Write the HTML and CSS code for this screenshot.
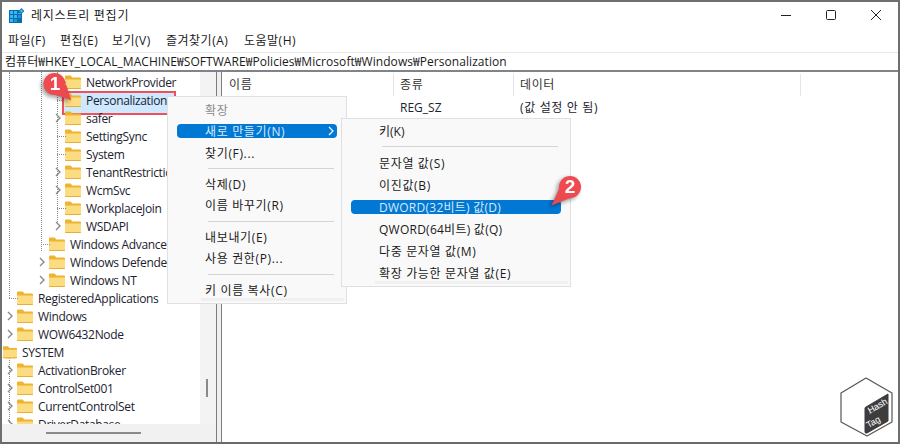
FILE: index.html
```html
<!DOCTYPE html>
<html lang="ko">
<head>
<meta charset="utf-8">
<title>레지스트리 편집기</title>
<link rel="stylesheet" href="styles.css">
</head>
<body>
<svg class="defs" width="0" height="0" aria-hidden="true">
  <defs>
    <symbol id="folder" viewBox="0 0 16 14">
      <path d="M0 1.5Q0 .5 1 .5H5.5L7.5 2.500H15Q16 2.500 16 3.500V13Q16 14 15 14H1Q0 14 0 13Z" fill="#eeb32f"/>
      <path d="M0 4.500H15.500Q16 4.500 16 5V13Q16 14 15 14H1Q0 14 0 13Z" fill="#fcdc80"/>
      <path d="M0 13H16V13.200Q16 14 15 14H1Q0 14 0 13.200Z" fill="#e9ae35"/>
    </symbol>
    <symbol id="chev" viewBox="0 0 8 10">
      <path d="M2 1L6 5L2 9" fill="none" stroke="#8a8a8a" stroke-width="1.400"/>
    </symbol>
  </defs>
</svg>
<div class="window">
  <header class="titlebar">
    <svg class="appicon" viewBox="0 0 15 15">
      <rect x="0" y="2" width="13" height="13" fill="#0b6cab"/>
      <path d="M1 3h3v3H1zM5 3h3v3H5zM9 5h3v1H9zM1 7h3v3H1zM5 7h3v3H5zM1 11h3v3H1z" fill="#35b9f4"/>
      <path d="M5 11h3v3H5zM9 7h3v3H9z" fill="#1f93d6"/>
      <path d="M12.500 0L15.500 3L12.500 6L9.500 3Z" fill="#1b86c8"/>
      <rect x="11.700" y="2.200" width="1.600" height="1.600" fill="#7fd0f5"/>
    </svg>
    <span class="title">레지스트리 편집기</span>
    <div class="controls">
      <svg viewBox="0 0 10 10"><path d="M0 5.500H10" stroke="#222" fill="none"/></svg>
      <svg viewBox="0 0 10 10"><rect x=".5" y=".5" width="9" height="9" rx="1" stroke="#222" fill="none"/></svg>
      <svg viewBox="0 0 10 10"><path d="M0 0L10 10M10 0L0 10" stroke="#222" fill="none"/></svg>
    </div>
  </header>
  <nav class="menubar">
    <span class="m1">파일(F)</span><span class="m2">편집(E)</span><span class="m3">보기(V)</span><span class="m4">즐겨찾기(A)</span><span>도움말(H)</span>
  </nav>
  <div class="address">컴퓨터₩HKEY_LOCAL_MACHINE₩SOFTWARE₩Policies₩Microsoft₩Windows₩Personalization</div>
  <main class="main">
    <section class="treepane">
      <div class="treeview">
        <i class="vl vl-a"></i><i class="vl vl-b"></i><i class="vl vl-c"></i><i class="vl vl-d"></i>
        <div class="row l5"><i class="stub"></i><svg class="folder"><use href="#folder"/></svg><span>NetworkProvider</span></div>
        <div class="row l5 selected"><i class="stub"></i><svg class="folder"><use href="#folder"/></svg><span class="sel-text">Personalization</span></div>
        <div class="row l5"><svg class="chev"><use href="#chev"/></svg><svg class="folder"><use href="#folder"/></svg><span>safer</span></div>
        <div class="row l5"><i class="stub"></i><svg class="folder"><use href="#folder"/></svg><span>SettingSync</span></div>
        <div class="row l5"><i class="stub"></i><svg class="folder"><use href="#folder"/></svg><span>System</span></div>
        <div class="row l5"><svg class="chev"><use href="#chev"/></svg><svg class="folder"><use href="#folder"/></svg><span>TenantRestrictions</span></div>
        <div class="row l5"><svg class="chev"><use href="#chev"/></svg><svg class="folder"><use href="#folder"/></svg><span>WcmSvc</span></div>
        <div class="row l5"><i class="stub"></i><svg class="folder"><use href="#folder"/></svg><span>WorkplaceJoin</span></div>
        <div class="row l5"><svg class="chev"><use href="#chev"/></svg><svg class="folder"><use href="#folder"/></svg><span>WSDAPI</span></div>
        <div class="row l4"><i class="stub"></i><svg class="folder"><use href="#folder"/></svg><span>Windows Advanced Threat</span></div>
        <div class="row l4"><svg class="chev"><use href="#chev"/></svg><svg class="folder"><use href="#folder"/></svg><span>Windows Defender</span></div>
        <div class="row l4"><svg class="chev"><use href="#chev"/></svg><svg class="folder"><use href="#folder"/></svg><span>Windows NT</span></div>
        <div class="row l3"><i class="stub"></i><svg class="folder"><use href="#folder"/></svg><span>RegisteredApplications</span></div>
        <div class="row l3"><svg class="chev"><use href="#chev"/></svg><svg class="folder"><use href="#folder"/></svg><span>Windows</span></div>
        <div class="row l3"><svg class="chev"><use href="#chev"/></svg><svg class="folder"><use href="#folder"/></svg><span>WOW6432Node</span></div>
        <div class="row l2"><svg class="folder"><use href="#folder"/></svg><span>SYSTEM</span></div>
        <div class="row l3"><svg class="chev"><use href="#chev"/></svg><svg class="folder"><use href="#folder"/></svg><span>ActivationBroker</span></div>
        <div class="row l3"><svg class="chev"><use href="#chev"/></svg><svg class="folder"><use href="#folder"/></svg><span>ControlSet001</span></div>
        <div class="row l3"><svg class="chev"><use href="#chev"/></svg><svg class="folder"><use href="#folder"/></svg><span>CurrentControlSet</span></div>
        <div class="row l3"><svg class="chev"><use href="#chev"/></svg><svg class="folder"><use href="#folder"/></svg><span>DriverDatabase</span></div>
      </div>
      <div class="vscroll"><b></b></div>
      <div class="hscroll"><b></b></div>
    </section>
    <div class="splitter"></div>
    <section class="listpane">
      <div class="listhead"><span class="c1">이름</span><span class="c2">종류</span><span class="c3">데이터</span></div>
      <div class="listrow"><span class="c1"></span><span class="c2 plain">REG_SZ</span><span class="c3 plain ko">(값 설정 안 됨)</span></div>
    </section>
  </main>
</div>

<div class="ctx ctx-main">
  <div class="item head ko">확장</div>
  <div class="item active ko">새로 만들기(N)<svg class="sub" viewBox="0 0 6 10"><path d="M1 1L5 5L1 9" fill="none" stroke="#fff" stroke-width="1.200"/></svg></div>
  <div class="item ko">찾기(F)...</div>
  <hr>
  <div class="item ko">삭제(D)</div>
  <div class="item ko">이름 바꾸기(R)</div>
  <hr>
  <div class="item ko">내보내기(E)</div>
  <div class="item ko">사용 권한(P)...</div>
  <hr>
  <div class="item ko">키 이름 복사(C)</div>
  <i class="band"></i>
</div>

<div class="ctx ctx-sub">
  <div class="item">키(K)</div>
  <hr>
  <div class="item ko">문자열 값(S)</div>
  <div class="item ko">이진값(B)</div>
  <div class="item active mixed">DWORD(32비트) 값(D)</div>
  <div class="item mixed">QWORD(64비트) 값(Q)</div>
  <div class="item ko">다중 문자열 값(M)</div>
  <div class="item ko">확장 가능한 문자열 값(E)</div>
  <i class="band"></i>
</div>

<div class="badge badge-1">
  <svg viewBox="0 0 44 44" width="44" height="44">
    <path d="M12 24L29 30L24 15Z" fill="#e84a50" stroke="#e84a50" stroke-width=".6" stroke-linejoin="round"/>
    <circle cx="12.500" cy="14" r="11" fill="#ee4a50"/>
  </svg>
  <span>1</span>
</div>
<div class="badge badge-2">
  <svg viewBox="0 0 44 44" width="44" height="44">
    <path d="M16 8L6 30L31 20Z" fill="#e84a50" stroke="#e84a50" stroke-width=".6" stroke-linejoin="round"/>
    <circle cx="24" cy="12" r="11" fill="#ee4a50"/>
  </svg>
  <span>2</span>
</div>

<div class="logo">
  <svg viewBox="0 0 58 64" width="58" height="64">
    <path d="M28 2L54 17V46L29 60L3 46V17Z" fill="#fff" stroke="#555" stroke-width="1.200" stroke-linejoin="round"/>
    <path d="M28 31L50 18V45L29 57Q27 57.500 27 56V32Q27 31.500 28 31Z" fill="#3d3d3d" stroke="#3d3d3d" stroke-linejoin="round"/>
    <path d="M31 38L48 28" stroke="#aaa" stroke-width=".5" fill="none"/>
  </svg>
  <span class="hash">Hash</span>
  <span class="tag">Tag</span>
</div>
</body>
</html>
```
FILE: styles.css
```css
* { box-sizing: border-box; }
html, body { margin: 0; padding: 0; }
body {
  width: 900px;
  height: 444px;
  overflow: hidden;
  background: #fff;
  position: relative;
  font-family: "Open Sans", "Noto Sans CJK KR", sans-serif;
  font-size: 12px;
  color: #1a1a1a;
}
.defs { position: absolute; }
.window {
  width: 900px;
  height: 444px;
  display: flex;
  flex-direction: column;
  border: 2px solid #6f6f6f;
  border-bottom-color: #6a6a6a;
  background: #fff;
}
.titlebar {
  height: 26px;
  flex: none;
  display: flex;
  align-items: center;
  padding-left: 7px;
}
.appicon { width: 15px; height: 15px; flex: none; }
.title { margin-left: 7px; font-size: 12px; letter-spacing: .75px; }
.controls { margin-left: auto; display: flex; gap: 35px; padding-right: 17px; }
.controls svg { width: 10px; height: 10px; }
.menubar {
  height: 24px;
  flex: none;
  display: flex;
  align-items: center;
  padding-left: 6px;
  font-size: 12px;
  letter-spacing: .5px;
  background: #fff;
}
.menubar span { white-space: nowrap; }
.menubar .m1 { width: 52px; }
.menubar .m2 { width: 52px; }
.menubar .m3 { width: 54px; }
.menubar .m4 { width: 78px; }
.address {
  height: 20px;
  flex: none;
  line-height: 17px;
  padding-left: 3px;
  background: #fff;
  border-top: 1px solid #e8e8e8;
  border-bottom: 2px solid #808388;
  white-space: nowrap;
  letter-spacing: .06px;
}
.main {
  flex: 1;
  min-height: 0;
  display: flex;
}
.treepane {
  width: 214px;
  flex: none;
  display: grid;
  grid-template-columns: 198px 16px;
  grid-template-rows: 1fr 18px;
  background: #f1f1f1;
}
.treeview {
  position: relative;
  overflow: hidden;
  background: #fff;
  padding-top: 1px;
}
.vscroll { background: #f3f3f3; display: flex; justify-content: center; }
.vscroll b { width: 2px; height: 18px; margin-top: 307px; background: #8a8a8a; margin-left: -2px; }
.hscroll { grid-column: 1 / 3; background: #f1f1f1; padding: 8px 0 0 44px; }
.hscroll b { display: block; width: 95px; height: 2px; background: #8a8a8a; }
.splitter {
  width: 6px;
  flex: none;
  background: #f0f0f0;
  border-left: 1px solid #7d7d7d;
  border-right: 1px solid #7d7d7d;
}
.listpane { flex: 1; background: #fff; padding-top: 2px; }
.row {
  height: 18px;
  position: relative;
  display: flex;
  align-items: center;
  white-space: nowrap;
}
.row .folder { width: 16px; height: 14px; flex: none; }
.row span { margin-left: 5px; letter-spacing: -.33px; color: #1c2230; }
.row.l5 { padding-left: 63px; }
.row.l4 { padding-left: 47px; }
.row.l3 { padding-left: 15px; }
.row.l2 { padding-left: 1px; }
.row.l2 .folder { width: 14px; }
.stub { position: absolute; width: 9px; border-top: 1px dotted #8c8c8c; top: 9px; }
.l5 .stub { left: 55px; }
.l4 .stub { left: 39px; }
.l3 .stub { left: 7px; }
.chev { position: absolute; width: 8px; height: 10px; top: 4px; }
.l5 .chev { left: 52px; }
.l4 .chev { left: 36px; }
.l3 .chev { left: 4px; }
.vl { position: absolute; width: 0; border-left: 1px dotted #8c8c8c; }
.vl-a { left: 7px; top: 0; height: 226px; }
.vl-b { left: 39px; top: 0; height: 179px; }
.vl-c { left: 55px; top: 0; height: 152px; }
.vl-d { left: 7px; top: 283px; height: 70px; }
.selected .folder { position: relative; }
.selected::before {
  content: "";
  position: absolute;
  left: 60px;
  top: 0;
  width: 110px;
  height: 20px;
  background: #cde8ff;
  border: 2px solid #f0505a;
}
.sel-text { position: relative; }
.listhead, .listrow { display: flex; align-items: center; }
.listhead { height: 22px; color: #333; }
.listrow { height: 22px; }
.c1 { width: 172px; padding-left: 7px; }
.c2 { width: 120px; padding-left: 6px; }
.c3 { width: 287px; padding-left: 6px; }
.listhead span { border-right: 1px solid #e5e5e5; height: 22px; line-height: 22px; letter-spacing: .6px; }
.plain { color: #1c2230; }
.ko { letter-spacing: .65px; }
.mixed { letter-spacing: .25px; }
.ctx {
  position: absolute;
  z-index: 2;
  background: #f9f9f9;
  border: 1px solid #e0e0e0;
  display: flex;
  flex-direction: column;
}
.ctx-main { left: 167px; top: 96px; width: 180px; height: 208px; padding: 2px 9px; }
.ctx-sub { left: 341px; top: 118px; width: 230px; height: 169px; padding: 1px 9px; }
.ctx .item {
  height: 22px;
  display: flex;
  align-items: center;
  padding-left: 28px;
  border-radius: 4px;
  white-space: nowrap;
  color: #1a1a1a;
  position: relative;
}
.ctx .head { color: #8a8a8a; }
.ctx .active {
  height: 14px;
  margin: 4px 0;
  background: #0078d4;
  color: #dce9f5;
}
.sub { position: absolute; right: 3px; top: 2px; width: 6px; height: 10px; }
.ctx hr {
  border: 0;
  height: 1px;
  background: #d4d4d4;
  margin: 4px 3px 5px 31px;
  flex: none;
}
.ctx-main hr { margin: 5px 3px 4px 31px; }
.ctx-main hr:nth-of-type(2) { margin-bottom: 5px; }
.ctx-main hr:nth-of-type(3) { margin: 5px 3px 5px 31px; }
.band {
  position: absolute;
  right: 2px;
  bottom: 2px;
  height: 3px;
  background: #f0f0f0;
}
.ctx-main .band { left: 33px; }
.ctx-sub .band { left: 33px; }
.badge { position: absolute; z-index: 3; width: 44px; height: 44px; filter: drop-shadow(-2px 2px 2px rgba(0,0,0,.4)); }
.badge svg { display: block; }
.badge span {
  position: absolute;
  color: #fff;
  font-family: "Liberation Sans", sans-serif;
  font-weight: 700;
  font-size: 19px;
  line-height: 20px;
  text-align: center;
  width: 20px;
}
.badge-1 { left: 42px; top: 70px; }
.badge-1 span { left: 3px; top: 4px; }
.badge-2 { left: 546px; top: 175px; }
.badge-2 span { left: 14px; top: 2px; }
.logo { position: absolute; left: 838px; top: 376px; width: 58px; height: 64px; }
.logo svg { display: block; }
.hash, .tag {
  position: absolute;
  color: #fff;
  font-family: "Liberation Sans", sans-serif;
  font-size: 9px;
  line-height: 10px;
  transform: rotate(-30deg);
  transform-origin: center;
}
.hash { left: 29px; top: 25px; }
.tag { left: 28px; top: 41px; }
```
